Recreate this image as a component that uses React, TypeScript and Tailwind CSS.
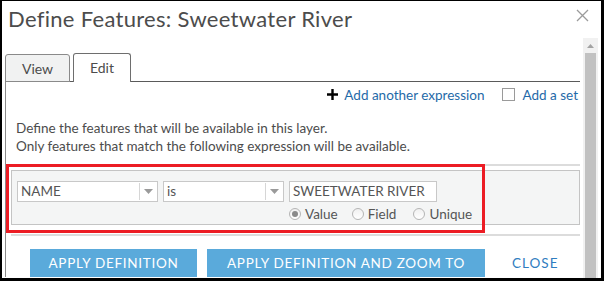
import React from 'react'

const font = { fontFamily: 'Lato, "Open Sans", sans-serif' }

function Dropdown({ label, width }: { label: string; width: string }) {
  return (
    <div className={`flex h-[21px] ${width} items-stretch border border-[#c8c8c8] bg-white`}>
      <div className="flex flex-1 items-center pl-[3px] text-[13.5px] text-[#555]">{label}</div>
      <div className="my-[1px] w-px bg-[#d6d6d6]" />
      <div className="flex w-[17px] items-center justify-center">
        <svg width="9" height="5" viewBox="0 0 9 5">
          <path d="M0 0 L9 0 L4.5 5 Z" fill="#9a9a9a" />
        </svg>
      </div>
    </div>
  )
}

function Radio({ label, checked, className = '' }: { label: string; checked?: boolean; className?: string }) {
  return (
    <div className={`flex items-center gap-[4px] ${className}`}>
      <div className="flex h-[12px] w-[12px] items-center justify-center rounded-full border border-[#b5b5b5] bg-gradient-to-b from-[#f0f0f0] to-[#ffffff]">
        {checked && <div className="h-[6px] w-[6px] rounded-full bg-[#8a8a8a]" />}
      </div>
      <span className="text-[13.5px] text-[#555]">{label}</span>
    </div>
  )
}

export default function App() {
  return (
    <div
      className="relative h-[281px] w-[604px] overflow-hidden border-l-2 border-t border-r-[3px] border-b-[3px] border-black bg-white"
      style={font}
    >
      {/* header */}
      <div className="flex h-[37px] items-start justify-between">
        <h1 className="pl-[6px] pt-[5px] text-[22px] leading-[26px] tracking-[0.3px] text-[#4c4c4c]">
          Define Features: Sweetwater River
        </h1>
        <svg className="mr-[12px] mt-[8px]" width="13" height="13" viewBox="0 0 13 13">
          <path d="M1 1 L12 12 M12 1 L1 12" stroke="#9b9b9b" strokeWidth="1.3" />
        </svg>
      </div>

      <div className="flex h-[240px]">
        {/* scrolling content */}
        <div className="relative flex-1 pl-[3px]">
          <div className="h-[15px]" />
          {/* tabs */}
          <div className="mr-[3px] flex h-[29px] items-end border-b border-[#5a5a5a]">
            <div className="mb-[-1px] flex h-[28px] w-[65px] items-center justify-center rounded-t-[3px] border border-[#8a8a8a] bg-[#f1f2f2] text-[14px] text-[#4c4c4c]">
              View
            </div>
            <div className="mb-[-1px] ml-[3px] flex h-[29px] w-[58px] items-center justify-center rounded-t-[3px] border border-b-0 border-[#6e6e6e] bg-white pb-[1px] text-[14px] text-[#4c4c4c]">
              Edit
            </div>
          </div>

          <div className="mr-[3px] border-l border-[#8a8a8a]">
            {/* links */}
            <div className="flex h-[23px] items-end justify-end gap-[17px] pr-[2px] text-[13.5px]">
              <div className="flex items-center gap-[6px] text-[#1f6aa8]">
                <svg width="11" height="11" viewBox="0 0 11 11">
                  <path d="M5.5 0 V11 M0 5.5 H11" stroke="#000" strokeWidth="2.4" />
                </svg>
                <span>Add another expression</span>
              </div>
              <div className="flex items-center gap-[8px] text-[#1f6aa8]">
                <div className="h-[13px] w-[13px] border border-[#9a9a9a] bg-white" />
                <span>Add a set</span>
              </div>
            </div>

            <div className="pl-[10px] pt-[14px] text-[13.5px] leading-[18px] text-[#4c4c4c]">
              <p>Define the features that will be available in this layer.</p>
              <p>Only features that match the following expression will be available.</p>
            </div>

            <div className="mt-[9px] h-[2px] bg-[#dcdcdc]" />

            {/* expression panel */}
            <div className="ml-[5px] mt-[4px] h-[55px] border border-[#c4c4c4] bg-[#f4f5f5] pl-[5px] pt-[10px]">
              <div className="flex gap-[5px]">
                <Dropdown label="NAME" width="w-[141px]" />
                <Dropdown label="is" width="w-[121px]" />
                <div className="flex h-[21px] w-[148px] items-center border border-[#c8c8c8] bg-white pl-[3px] text-[13.5px] text-[#555]">
                  SWEETWATER RIVER
                </div>
              </div>
              <div className="ml-[272px] mt-[2px] flex gap-[14px]">
                <Radio label="Value" checked />
                <Radio label="Field" />
                <Radio label="Unique" className="ml-[3px]" />
              </div>
            </div>

            <div className="ml-[5px] mt-[9px] h-[2px] bg-[#dcdcdc]" />

            {/* buttons */}
            <div className="flex items-center pl-[24px] pt-[13px]">
              <button className="h-[28px] w-[167px] bg-[#5aaadb] text-[13.5px] tracking-[0.7px] text-white">
                APPLY DEFINITION
              </button>
              <button className="ml-[10px] h-[28px] w-[278px] bg-[#5aaadb] text-[13.5px] tracking-[0.7px] text-white">
                APPLY DEFINITION AND ZOOM TO
              </button>
              <span className="ml-[27px] text-[13.5px] tracking-[1px] text-[#2f7dc0]">CLOSE</span>
            </div>
          </div>

          {/* highlight box */}
          <div className="pointer-events-none absolute left-[4px] top-[126px] h-[69px] w-[479px] border-[3px] border-[#ec1c24]" />
        </div>

        {/* scrollbar */}
        <div className="mr-[3px] w-[15px] bg-[#f1f1f1]">
          <div className="flex h-[15px] items-center justify-center">
            <svg width="7" height="4" viewBox="0 0 7 4">
              <path d="M0 4 L7 4 L3.5 0 Z" fill="#a3a3a3" />
            </svg>
          </div>
          <div className="mx-[2px] h-[230px] bg-[#c1c1c1]" />
        </div>
      </div>
    </div>
  )
}
